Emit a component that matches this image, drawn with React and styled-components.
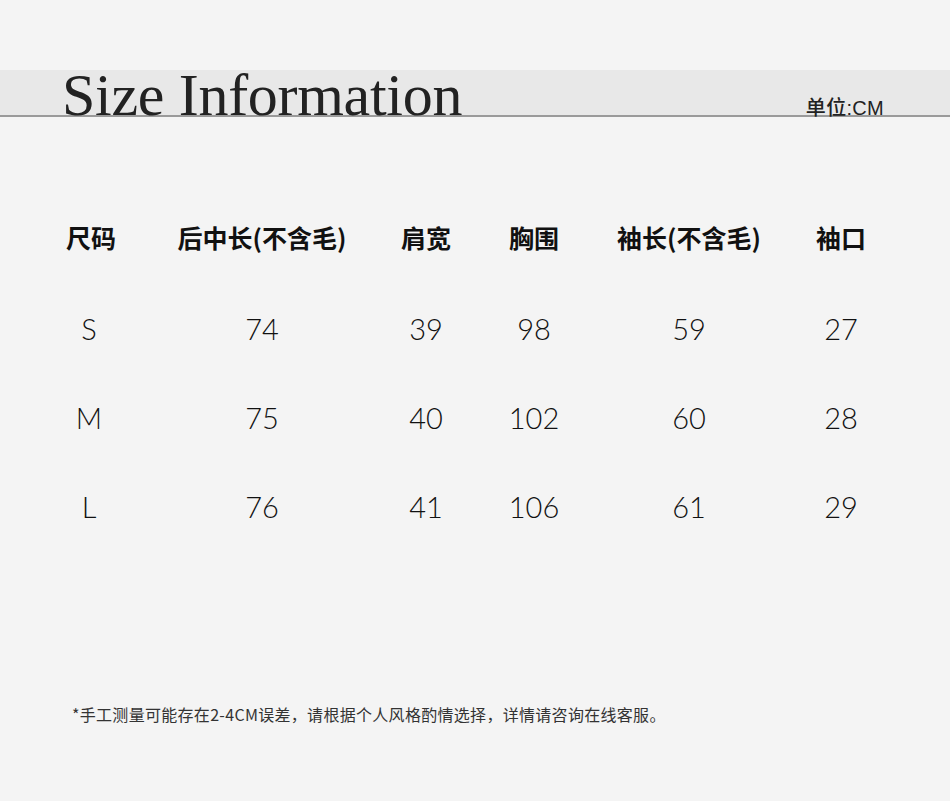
import styled, { createGlobalStyle } from "styled-components";

const GlobalStyle = createGlobalStyle`
  body {
    margin: 0;
    background: #f4f4f4;
  }
`;

const Page = styled.div`
  width: 950px;
  height: 801px;
  padding-top: 70px;
  box-sizing: border-box;
  background: #f4f4f4;
  font-family: "Noto Sans CJK SC", sans-serif;
  color: #1a1a1a;
  overflow: hidden;
`;

const Band = styled.div`
  height: 45px;
  background: #e8e8e8;
  border-bottom: 2px solid #9a9a9a;
  display: flex;
  align-items: flex-end;
  justify-content: space-between;
  padding: 0 66px 0 62px;
`;

const Title = styled.h1`
  margin: 0 0 -10px 0;
  font-family: "Liberation Serif", serif;
  font-weight: 400;
  font-size: 60px;
  line-height: 1;
  color: #222;
  letter-spacing: -0.3px;
`;

const Unit = styled.span`
  margin-bottom: -3px;
  font-family: "Liberation Sans", "Noto Sans CJK SC", sans-serif;
  font-weight: 500;
  font-size: 20px;
  line-height: 1;
  letter-spacing: 0.3px;
  color: #222;
`;

const Table = styled.div`
  margin-top: 78px;
  margin-left: 41px;
  display: grid;
  grid-template-columns: 100px 242px 86px 130px 180px 124px;
  grid-auto-rows: 89px;
  align-items: center;
  justify-items: center;
`;

const Head = styled.div`
  margin-bottom: 6px;
  font-family: "Noto Sans CJK SC", sans-serif;
  font-weight: 700;
  font-size: 25px;
  color: #111;
  white-space: nowrap;
`;

const Cell = styled.div`
  font-family: "Lato", "Noto Sans", sans-serif;
  font-weight: 300;
  font-size: 29px;
  color: #111;
  margin-left: ${(p) => (p.$first ? "-4px" : "0")};
`;

const Note = styled.p`
  margin: 151px 0 0 72px;
  font-family: "Noto Sans CJK SC", sans-serif;
  font-size: 16px;
  line-height: 24px;
  letter-spacing: 0.3px;
  color: #333;
`;

const heads = ["尺码", "后中长(不含毛)", "肩宽", "胸围", "袖长(不含毛)", "袖口"];
const rows = [
  ["S", "74", "39", "98", "59", "27"],
  ["M", "75", "40", "102", "60", "28"],
  ["L", "76", "41", "106", "61", "29"],
];

export default function App() {
  return (
    <Page>
      <GlobalStyle />
      <Band>
        <Title>Size Information</Title>
        <Unit>单位:CM</Unit>
      </Band>
      <Table>
        {heads.map((h) => (
          <Head key={h}>{h}</Head>
        ))}
        {rows.map((r) =>
          r.map((v, i) => (
            <Cell key={r[0] + i} $first={i === 0}>
              {v}
            </Cell>
          ))
        )}
      </Table>
      <Note>*手工测量可能存在2-4CM误差，请根据个人风格酌情选择，详情请咨询在线客服。</Note>
    </Page>
  );
}
